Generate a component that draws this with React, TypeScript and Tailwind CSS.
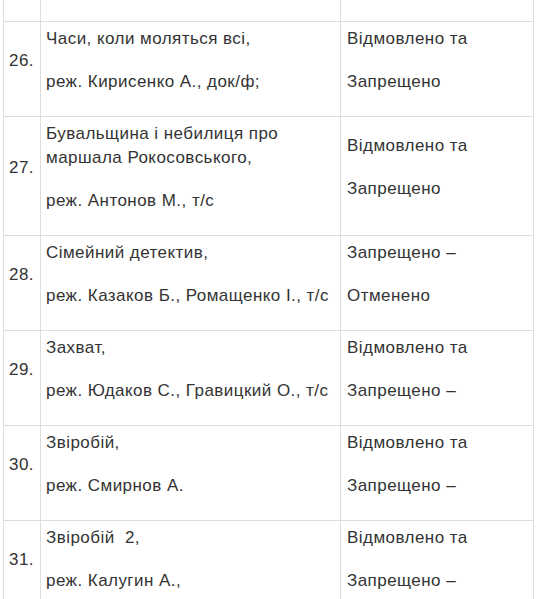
import React from "react";

type Row = { n: string; title: React.ReactNode[]; status: string[] };

const rows: Row[] = [
  {
    n: "26.",
    title: ["Часи, коли моляться всі,", "реж. Кирисенко А., док/ф;"],
    status: ["Відмовлено та", "Запрещено"],
  },
  {
    n: "27.",
    title: [
      <>
        Бувальщина і небилиця про
        <br />
        маршала Рокосовського,
      </>,
      "реж. Антонов М., т/с",
    ],
    status: ["Відмовлено та", "Запрещено"],
  },
  {
    n: "28.",
    title: ["Сімейний детектив,", "реж. Казаков Б., Ромащенко І., т/с"],
    status: ["Запрещено –", "Отменено"],
  },
  {
    n: "29.",
    title: ["Захват,", "реж. Юдаков С., Гравицкий О., т/с"],
    status: ["Відмовлено та", "Запрещено –"],
  },
  {
    n: "30.",
    title: ["Звіробій,", "реж. Смирнов А."],
    status: ["Відмовлено та", "Запрещено –"],
  },
  {
    n: "31.",
    title: ["Звіробій\u00a0 2,", "реж. Калугин А.,"],
    status: ["Відмовлено та", "Запрещено –"],
  },
];

function Cell({ children, last }: { children: React.ReactNode; last?: boolean }) {
  return (
    <div
      className={
        "flex flex-col justify-center pt-[5px] pb-[3px] pr-[4px] border-r border-[#dddddd] " +
        (last ? "pl-[6px]" : "pl-[5px]")
      }
    >
      {children}
    </div>
  );
}

function P({ children }: { children: React.ReactNode }) {
  return <p className="mb-[19px] whitespace-nowrap">{children}</p>;
}

export default function App() {
  return (
    <div
      className="w-[536px] h-[599px] overflow-hidden bg-white text-[17px] leading-[24px] tracking-[0.45px] text-[#333333]"
      style={{ fontFamily: '"Liberation Sans", Arial, sans-serif' }}
    >
      <div className="ml-[3px] w-[531px] border-l border-[#dddddd]">
        <div className="grid grid-cols-[37px_300px_193px] h-[22px] border-b border-[#dddddd]">
          <div className="border-r border-[#dddddd]" />
          <div className="border-r border-[#dddddd]" />
          <div className="border-r border-[#dddddd]" />
        </div>
        {rows.map((r) => (
          <div
            key={r.n}
            className="grid grid-cols-[37px_300px_193px] border-b border-[#dddddd]"
          >
            <Cell>
              <P>{r.n}</P>
            </Cell>
            <Cell>
              {r.title.map((t, i) => (
                <P key={i}>{t}</P>
              ))}
            </Cell>
            <Cell last>
              {r.status.map((s, i) => (
                <P key={i}>{s}</P>
              ))}
            </Cell>
          </div>
        ))}
      </div>
    </div>
  );
}
